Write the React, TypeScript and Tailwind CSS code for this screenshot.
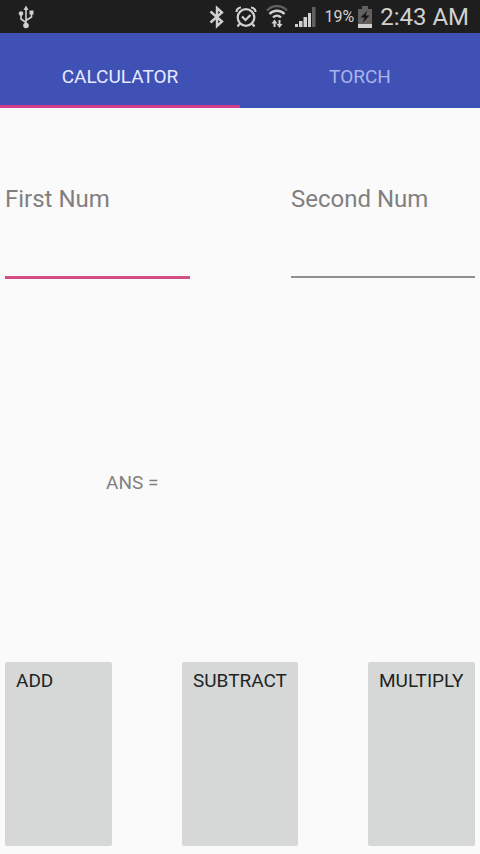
import { useState } from "react";

function UsbIcon() {
  return (
    <svg width="16" height="24" viewBox="0 0 16 24" fill="none" stroke="#d0d0d0" strokeWidth="1.6" aria-hidden="true">
      <path d="M8 4v16M8 17.500L3 14V9M8 15.500l5.500-3.500V8" />
      <path d="M8 0.500l2.500 4.500h-5z" fill="#d0d0d0" stroke="none" />
      <circle cx="8" cy="20.500" r="2.800" fill="#d0d0d0" stroke="none" />
      <circle cx="3" cy="8.500" r="2.300" fill="#d0d0d0" stroke="none" />
      <path d="M11.500 5.500h4v4h-4z" fill="#d0d0d0" stroke="none" />
    </svg>
  );
}

function BluetoothIcon() {
  return (
    <svg width="16" height="24" viewBox="0 0 16 24" fill="none" stroke="#d0d0d0" strokeWidth="2.400" aria-hidden="true">
      <path d="M1.500 6.500L13 16.500L8 21V3L13 7.500L1.500 17.500" />
    </svg>
  );
}

function AlarmIcon() {
  return (
    <svg width="22" height="24" viewBox="0 0 22 24" fill="none" stroke="#d0d0d0" strokeWidth="2.200" aria-hidden="true">
      <circle cx="11" cy="12.500" r="8.300" />
      <path d="M7 11.500l3.500 3.500l5-5" />
      <path d="M1.500 7c0-2.500 2-4.500 4.500-4.500M20.500 7c0-2.500-2-4.500-4.500-4.500M4.500 19l-2 2.500M17.500 19l2 2.500" />
    </svg>
  );
}

function WifiIcon() {
  return (
    <svg width="22" height="24" viewBox="0 0 22 24" fill="none" strokeWidth="2.400" aria-hidden="true">
      <path d="M1 5.500C6.500-0.500 15.500-0.500 21 5.500" stroke="#606060" />
      <path d="M3.500 9c4-4.300 11-4.300 15 0M7 12.500c2.400-2.300 5.600-2.300 8 0" stroke="#d0d0d0" />
      <path d="M8.500 22v-6M13.500 15v6" stroke="#d0d0d0" strokeWidth="2" />
      <path d="M5.500 18.500l3-4l3 4zM10.500 19l3 4l3-4z" fill="#d0d0d0" />
    </svg>
  );
}

function SignalIcon() {
  return (
    <svg width="22" height="24" viewBox="0 0 22 24" aria-hidden="true">
      <path d="M1 19h3v3H1zM5 16h3.500v6H5zM9.500 12h3.500v10H9.500zM14 8h3v14h-3z" fill="#d0d0d0" />
      <path d="M18 2h3.500v20h-3.500z" fill="#606060" />
    </svg>
  );
}

function BatteryIcon() {
  return (
    <svg width="14" height="24" viewBox="0 0 14 24" aria-hidden="true">
      <path d="M4 1h6v3h4v19H0V4h4z" fill="#606060" />
      <path d="M0 19h14v4H0z" fill="#d0d0d0" />
      <path d="M9.500 5.500L2.500 12.500h4l-2 5.500l7-7.500h-4z" fill="#161616" />
    </svg>
  );
}

function StatusBar() {
  return (
    <header className="flex h-[33px] items-center bg-[#1e1e1e] pr-[11px] pl-[18px] text-[#d0d0d0]">
      <UsbIcon />
      <div className="ml-auto flex items-center">
        <div className="flex items-center gap-[10px]">
          <BluetoothIcon />
          <div className="flex gap-[9px]">
            <AlarmIcon />
            <WifiIcon />
          </div>
        </div>
        <div className="ml-[6px] flex items-center gap-2">
          <SignalIcon />
          <div className="flex items-center gap-1">
            <span className="text-[16px] leading-6">19%</span>
            <BatteryIcon />
          </div>
          <span className="text-[24px] leading-8">2:43 AM</span>
        </div>
      </div>
    </header>
  );
}

const TABS = ["CALCULATOR", "TORCH"];

export default function App() {
  const [tab, setTab] = useState("CALCULATOR");
  return (
    <div className="flex min-h-screen flex-col bg-[#fafafa] font-[Roboto,sans-serif]">
      <StatusBar />
      <nav className="flex h-[75px] bg-[#3f51b5]">
        {TABS.map((name) => (
          <button
            key={name}
            type="button"
            onClick={() => setTab(name)}
            className={
              "flex-1 border-b-[3px] pt-5 pb-1 text-[19px] leading-6 " +
              (tab === name ? "border-[#d0408f] text-[#e6eaff]" : "border-[#3f51b5] text-[#a9b4ec]")
            }
          >
            {name}
          </button>
        ))}
      </nav>
      <main className="flex flex-1 flex-col px-[5px] pt-[77px] pb-2">
        <div className="flex justify-between">
          <div className="flex w-[185px] flex-col">
            <label htmlFor="first" className="text-[24px] leading-7 text-[#808080]">First Num</label>
            <input
              id="first"
              inputMode="decimal"
              className="h-[66px] border-b-[3px] border-[#d14e86] bg-transparent pt-5 text-[24px] outline-none"
            />
          </div>
          <div className="flex w-[184px] flex-col">
            <label htmlFor="second" className="text-[24px] leading-7 text-[#808080]">Second Num</label>
            <input
              id="second"
              inputMode="decimal"
              className="h-[65px] border-b-2 border-[#909090] bg-transparent pt-5 text-[24px] outline-none"
            />
          </div>
        </div>
        <p className="mt-48 ml-[101px] text-[19px] leading-6 text-[#808080]">ANS =</p>
        <div className="mt-auto flex h-[184px] items-stretch justify-between text-[19px] leading-6 text-[#222424]">
          <button type="button" className="flex w-[107px] items-start rounded-[2px] bg-[#d6d8d7] px-[11px] pt-[7px]">ADD</button>
          <button type="button" className="flex w-[116px] items-start rounded-[2px] bg-[#d6d8d7] px-[11px] pt-[7px]">SUBTRACT</button>
          <button type="button" className="flex w-[107px] items-start rounded-[2px] bg-[#d6d8d7] px-[11px] pt-[7px]">MULTIPLY</button>
        </div>
      </main>
    </div>
  );
}
